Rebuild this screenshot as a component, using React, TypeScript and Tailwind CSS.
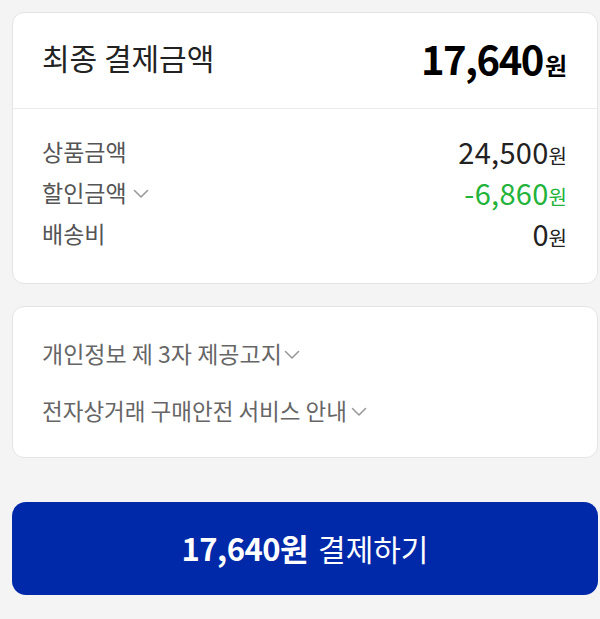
import React from "react";

const font = { fontFamily: '"Noto Sans CJK KR", "Noto Sans", sans-serif' };

function Chevron({ className }: { className?: string }) {
  return (
    <svg className={className} width="16" height="10" viewBox="0 0 16 10" fill="none">
      <path d="M1.5 1.5 L8 8 L14.5 1.5" stroke="#9a9a9a" strokeWidth="1.6" strokeLinecap="round" strokeLinejoin="round" />
    </svg>
  );
}

export default function App() {
  return (
    <div className="w-[600px] h-[619px] bg-[#f4f4f4] pt-3 pl-3 pr-[2px] overflow-hidden" style={font}>
      <div className="bg-white rounded-[12px] border border-[#e4e4e4]">
        <div className="h-[96px] flex items-center justify-between pl-[29px] pr-[30px] pb-[6px] border-b border-[#ececec]">
          <span className="text-[30px] text-[#222]">최종 결제금액</span>
          <span className="flex items-baseline text-black font-bold">
            <span className="text-[40px] tracking-[-1.5px] leading-none">17,640</span>
            <span className="text-[24px] leading-none ml-[2px]">원</span>
          </span>
        </div>
        <div className="pt-[22px] pb-[29px] pl-[29px] pr-[30px]">
          <div className="h-[41px] flex items-center justify-between">
            <span className="text-[23px] text-[#555]">상품금액</span>
            <span className="flex items-baseline text-[#222]">
              <span className="text-[29px] tracking-[0.3px]">24,500</span>
              <span className="text-[20px]">원</span>
            </span>
          </div>
          <div className="h-[41px] flex items-center justify-between">
            <span className="flex items-center text-[23px] text-[#555]">
              할인금액
              <Chevron className="ml-[6px] mt-[2px]" />
            </span>
            <span className="flex items-baseline text-[#22b33a]">
              <span className="text-[29px] tracking-[0.3px]">-6,860</span>
              <span className="text-[20px]">원</span>
            </span>
          </div>
          <div className="h-[41px] flex items-center justify-between">
            <span className="text-[23px] text-[#555]">배송비</span>
            <span className="flex items-baseline text-[#222]">
              <span className="text-[29px]">0</span>
              <span className="text-[20px]">원</span>
            </span>
          </div>
        </div>
      </div>

      <div className="mt-[22px] bg-white rounded-[12px] border border-[#e4e4e4] py-[18px] pl-[29px]">
        <div className="h-[57px] flex items-center text-[23px] text-[#666]">
          개인정보 제 3자 제공고지
          <Chevron className="ml-[2px] mt-[2px]" />
        </div>
        <div className="h-[57px] flex items-center text-[22.5px] text-[#666]">
          전자상거래 구매안전 서비스 안내
          <Chevron className="ml-[4px] mt-[2px]" />
        </div>
      </div>

      <div className="mt-[44px] h-[93px] rounded-[14px] bg-[#0029a9] flex items-center justify-center text-white">
        <span className="text-[31px] font-bold tracking-[-0.5px]">17,640원</span>
        <span className="text-[30px] ml-[10px]">결제하기</span>
      </div>
    </div>
  );
}
